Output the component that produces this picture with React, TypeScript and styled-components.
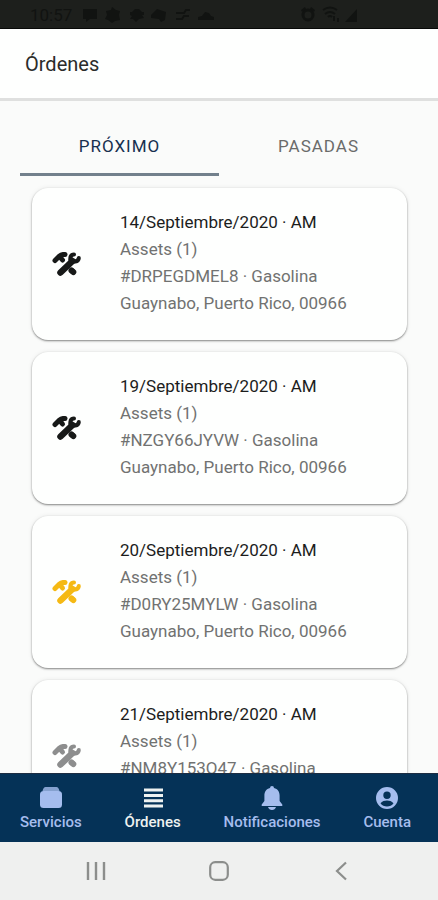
import React, { useState } from "react";
import styled, { createGlobalStyle } from "styled-components";

const GlobalStyle = createGlobalStyle`
  *, *::before, *::after { box-sizing: border-box; }
  body {
    margin: 0;
    background: #fafbfa;
    font-family: Roboto, "Liberation Sans", sans-serif;
  }
  button { font: inherit; border: 0; background: none; padding: 0; cursor: pointer; }
  svg { display: block; flex: none; }
`;

const Screen = styled.div`
  display: flex;
  flex-direction: column;
  height: 100vh;
`;

const StatusBar = styled.div`
  display: flex;
  flex: none;
  align-items: center;
  justify-content: space-between;
  height: 29px;
  padding: 1px 80px 0 30px;
  background: #1d1f1c;
  border-bottom: 1px solid #080908;
  color: #111311;
  font-size: 17px;
`;

const StatusGroup = styled.div`
  display: flex;
  align-items: center;
  gap: 10px;
`;

const Header = styled.header`
  display: flex;
  flex: none;
  align-items: center;
  height: 72px;
  padding: 0 25px;
  background: #fefffe;
  border-bottom: 3px solid #dfe0df;
`;

const Title = styled.h1`
  margin: 0;
  color: #2b2c2b;
  font-size: 20px;
  font-weight: 400;
  line-height: 24px;
`;

const Tabs = styled.div`
  display: flex;
  flex: none;
  margin: 18px 20px 0;
`;

const Tab = styled.button<{ $active: boolean }>`
  flex: 1;
  height: 57px;
  border-bottom: 3px solid ${(p) => (p.$active ? "#72808c" : "transparent")};
  color: ${(p) => (p.$active ? "#17304f" : "#6a6b6a")};
  font-size: 17px;
  font-weight: 400;
  letter-spacing: 1px;
`;

const List = styled.main`
  display: flex;
  flex: 1;
  flex-direction: column;
  gap: 12px;
  min-height: 0;
  padding: 12px 31px 12px 32px;
  overflow-y: auto;
  scrollbar-width: none;
`;

const Card = styled.article`
  display: flex;
  flex: none;
  align-items: center;
  gap: 39px;
  min-height: 152px;
  padding: 0 20px;
  border-radius: 16px;
  background: #fefffe;
  box-shadow: 0 1px 2px rgba(0, 0, 0, 0.45), 0 0 5px rgba(0, 0, 0, 0.08);
`;

const Details = styled.div`
  min-width: 0;
  padding-bottom: 3px;
`;

const Line = styled.p<{ $strong?: boolean }>`
  margin: 0;
  color: ${(p) => (p.$strong ? "#1c1d1c" : "#717271")};
  font-size: 17px;
  line-height: 27px;
  white-space: nowrap;
`;

const BottomNav = styled.nav`
  display: flex;
  flex: none;
  justify-content: space-between;
  height: 69px;
  padding: 12px 27px 0 20px;
  border-top: 1px solid #1d2d42;
  background: #053257;
`;

const NavItem = styled.button<{ $active: boolean }>`
  display: flex;
  flex-direction: column;
  align-items: center;
  gap: 2px;
  height: 48px;
  color: ${(p) => (p.$active ? "#eef2f1" : "#a5bdee")};
  font-size: 15px;
  font-weight: 500;
  line-height: 20px;
`;

const SystemBar = styled.div`
  display: flex;
  flex: none;
  align-items: center;
  justify-content: space-around;
  height: 58px;
  padding: 0 34px;
  background: #eff0ef;
`;

const SystemButton = styled.button`
  display: grid;
  place-items: center;
  width: 48px;
  height: 48px;
  color: #8c8e8c;
`;

const ToolsIcon = ({ color }: { color: string }) => (
  <svg width="29" height="24" viewBox="0 0 29 24" fill="none" stroke={color} strokeLinecap="round" strokeLinejoin="round" aria-hidden="true">
    <path d="M3 8.500 7 4.500Q10 2 13 2.500" strokeWidth="5" />
    <path d="M8 5 10.500 8" strokeWidth="5" />
    <path d="M18.800 17.800 21.500 20.300" strokeWidth="5.500" strokeLinecap="butt" />
    <path d="M19.500 18.500 21.300 20" strokeWidth="6" />
    <path d="M8.500 20.500 19.500 10" strokeWidth="6.500" />
    <path d="M22 2.500C18.500 2.500 17.800 5.500 18.800 8 20.500 10.500 26.500 10.200 26.800 6" strokeWidth="4" />
    <path d="M19 7.500 21.500 9" strokeWidth="5" />
  </svg>
);

const StatusLeftIcons = () => (
  <svg width="134" height="18" viewBox="0 0 134 18" fill="currentColor" aria-hidden="true">
    <path d="M1 3h14v10H8l-4 3v-3H1z" />
    <path d="m30 1 4 3 4 1-1 4 1 5-5 1-3 2-4-3-3-1 2-4-1-4 5-1z" />
    <path d="M48 6h2l3-3h4l3 3h2v3h-2l2 3-5 1-3 3-3-3h-3l2-3-2-1z" />
    <path d="m69 9 6-6 9 3-1 8-4 2-2-3-8-1z" />
    <path d="M94 7h8l2-3h4M94 13h6l2-3h5" fill="none" stroke="currentColor" strokeWidth="2" />
    <path d="M116 14v-3l4-1 3-4 4 1 2 3 3 1v3z" />
  </svg>
);

const StatusRightIcons = () => (
  <svg width="58" height="18" viewBox="0 0 58 18" fill="currentColor" aria-hidden="true">
    <circle cx="8" cy="9" r="5" fill="none" stroke="currentColor" strokeWidth="3" />
    <path d="m1 4 4-3 1 2-4 3zM15 4l-4-3-1 2 4 3z" />
    <path d="M23 4q7-5 14 0M25 8q5-4 10 0M28 11q2-2 4 0M34 10v5M38 12v4" fill="none" stroke="currentColor" strokeWidth="2" />
    <path d="m45 16 12-13v13z" />
  </svg>
);

const ServicesIcon = () => (
  <svg width="24" height="24" viewBox="0 0 24 24" fill="currentColor" aria-hidden="true">
    <path d="M6.500 1h11q2 0 3 4h-17q1-4 3-4z" opacity="0.8" />
    <rect x="1" y="5" width="22" height="17" rx="3.500" />
  </svg>
);

const OrdersIcon = () => (
  <svg width="24" height="24" viewBox="0 0 24 24" fill="currentColor" aria-hidden="true">
    <path d="M3 2.500h19v3H3zM3 8h19v3H3zM3 13.200h19v3H3zM3 18.500h19v3H3z" />
  </svg>
);

const BellIcon = () => (
  <svg width="24" height="24" viewBox="0 0 24 24" fill="currentColor" aria-hidden="true">
    <path d="M12 0a2 2 0 0 1 2 2c3.800 1 5.600 3.800 5.600 7.500V15l2.700 3.500V20H1.700v-1.500L4.400 15V9.500C4.400 5.800 6.200 3 10 2a2 2 0 0 1 2-2zM8 21h8q-1 3-4 3t-4-3z" />
  </svg>
);

const AccountIcon = () => (
  <svg width="24" height="24" viewBox="0 0 24 24" fill="currentColor" aria-hidden="true">
    <path fillRule="evenodd" d="M12 1a11 11 0 1 1 0 22 11 11 0 0 1 0-22zm0 4.500a3.700 3.700 0 1 0 0 7.400 3.700 3.700 0 0 0 0-7.400zM5.500 17.200c2.800 4.400 10.200 4.400 13 0-1.800-2-4-2.700-6.500-2.700s-4.700.7-6.500 2.700z" />
  </svg>
);

const orders = [
  { date: "14/Septiembre/2020 · AM", code: "#DRPEGDMEL8", color: "#171918" },
  { date: "19/Septiembre/2020 · AM", code: "#NZGY66JYVW", color: "#171918" },
  { date: "20/Septiembre/2020 · AM", code: "#D0RY25MYLW", color: "#f5b914" },
  { date: "21/Septiembre/2020 · AM", code: "#NM8Y153O47", color: "#8d8e8e" },
];

const destinations = [
  { label: "Servicios", Icon: ServicesIcon },
  { label: "Órdenes", Icon: OrdersIcon },
  { label: "Notificaciones", Icon: BellIcon },
  { label: "Cuenta", Icon: AccountIcon },
];

export default function App() {
  const [tab, setTab] = useState("PRÓXIMO");
  const [page, setPage] = useState("Órdenes");

  return (
    <>
      <GlobalStyle />
      <Screen>
        <StatusBar>
          <StatusGroup>
            <span>10:57</span>
            <StatusLeftIcons />
          </StatusGroup>
          <StatusRightIcons />
        </StatusBar>
        <Header>
          <Title>Órdenes</Title>
        </Header>
        <Tabs role="tablist">
          {["PRÓXIMO", "PASADAS"].map((name) => (
            <Tab key={name} role="tab" aria-selected={tab === name} $active={tab === name} onClick={() => setTab(name)}>
              {name}
            </Tab>
          ))}
        </Tabs>
        <List>
          {orders.map((order) => (
            <Card key={order.code}>
              <ToolsIcon color={order.color} />
              <Details>
                <Line $strong>{order.date}</Line>
                <Line>Assets (1)</Line>
                <Line>{order.code} · Gasolina</Line>
                <Line>Guaynabo, Puerto Rico, 00966</Line>
              </Details>
            </Card>
          ))}
        </List>
        <BottomNav>
          {destinations.map(({ label, Icon }) => (
            <NavItem key={label} $active={page === label} onClick={() => setPage(label)}>
              <Icon />
              {label}
            </NavItem>
          ))}
        </BottomNav>
        <SystemBar>
          <SystemButton aria-label="Recientes">
            <svg width="20" height="20" viewBox="0 0 20 20" fill="none" stroke="currentColor" strokeWidth="2.4">
              <path d="M2 1v18M10 1v18M18 1v18" />
            </svg>
          </SystemButton>
          <SystemButton aria-label="Inicio">
            <svg width="20" height="20" viewBox="0 0 20 20" fill="none" stroke="currentColor" strokeWidth="2.2">
              <rect x="1.200" y="1.200" width="17.600" height="17.600" rx="5" />
            </svg>
          </SystemButton>
          <SystemButton aria-label="Atrás">
            <svg width="20" height="20" viewBox="0 0 20 20" fill="none" stroke="currentColor" strokeWidth="2.2">
              <path d="M14 1.500 5 10l9 8.500" />
            </svg>
          </SystemButton>
        </SystemBar>
      </Screen>
    </>
  );
}
